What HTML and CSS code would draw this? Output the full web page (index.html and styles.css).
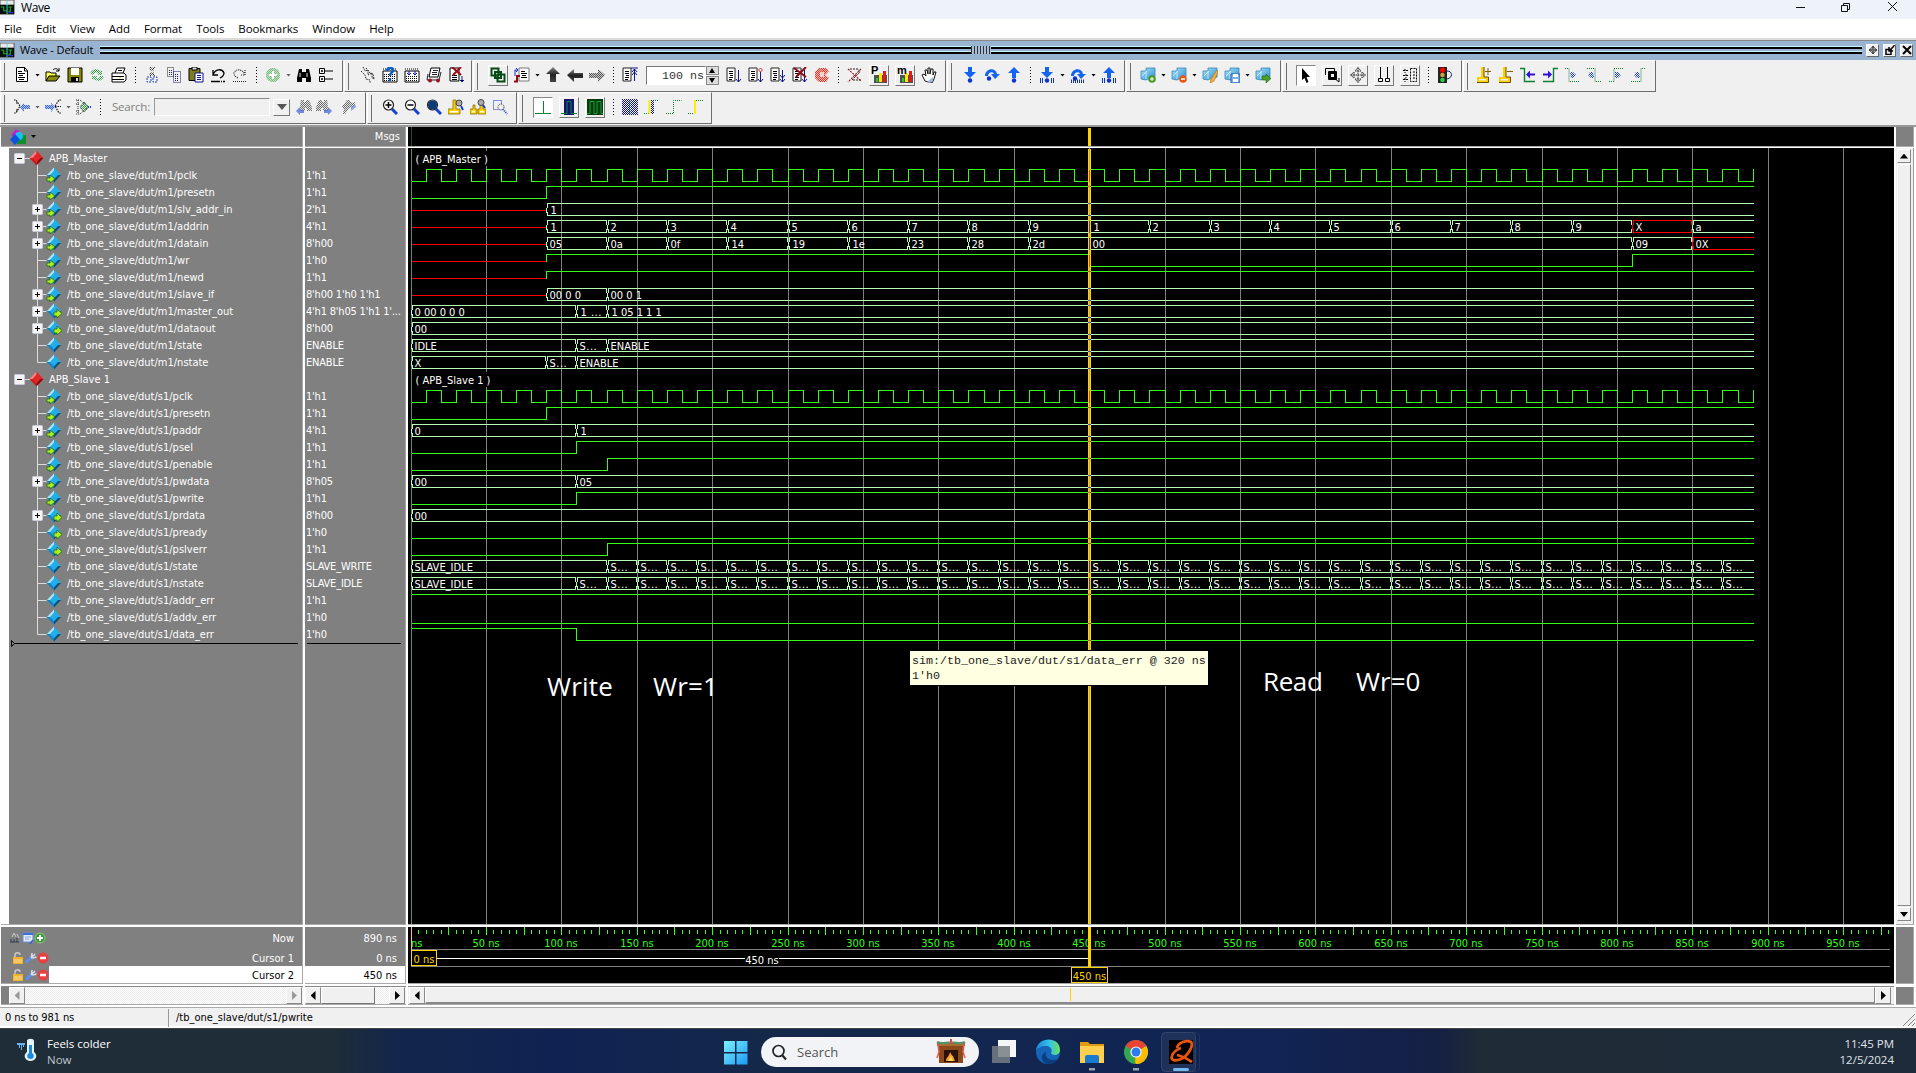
FILE: index.html
```html
<!DOCTYPE html>
<html lang="en">
<head>
<meta charset="utf-8">
<title>Wave</title>
<link rel="stylesheet" href="styles.css">
</head>
<body>
<svg class="defs" width="0" height="0">
  <defs>
    <pattern id="dk" width="2" height="2" patternUnits="userSpaceOnUse"><path d="M0 0h1v1H0zM1 1h1v1H1z" fill="#222"/></pattern>
    <pattern id="db" width="2" height="2" patternUnits="userSpaceOnUse"><path d="M0 0h1v1H0zM1 1h1v1H1z" fill="#1e3cc8"/></pattern>
    <pattern id="dn" width="2" height="2" patternUnits="userSpaceOnUse"><path d="M0 0h1v1H0zM1 1h1v1H1z" fill="#141478"/></pattern>
    <pattern id="dg" width="2" height="2" patternUnits="userSpaceOnUse"><path d="M0 0h1v1H0zM1 1h1v1H1z" fill="#2aa040"/></pattern>
    <pattern id="dr" width="2" height="2" patternUnits="userSpaceOnUse"><path d="M0 0h1v1H0zM1 1h1v1H1z" fill="#f02010"/></pattern>
    <linearGradient id="arr" x1="0" y1="0" x2="0" y2="1"><stop offset="0" stop-color="#888"/><stop offset=".5" stop-color="#222"/><stop offset="1" stop-color="#444"/></linearGradient>
    <linearGradient id="cube" x1="0" y1="0" x2="1" y2="1"><stop offset="0" stop-color="#a8e4fa"/><stop offset="1" stop-color="#2a8ed0"/></linearGradient>
    <linearGradient id="win" x1="0" y1="0" x2="1" y2="1"><stop offset="0" stop-color="#7df0fd"/><stop offset="1" stop-color="#1a9af5"/></linearGradient>
    <linearGradient id="edge" x1="0" y1="0" x2="1" y2="0"><stop offset="0" stop-color="#1b86d8"/><stop offset=".55" stop-color="#35c1ea"/><stop offset="1" stop-color="#6be25a"/></linearGradient>
    <symbol id="app" viewBox="0 0 16 16"><path d="M0 0h15v15H0z" fill="#e8e8e8" stroke="#555"/><path d="M0 5h15v10H0z" fill="#061006"/><path d="M1 7.500h3v4h3M9 7.500h4M9 12h2V8" stroke="#1cab30" stroke-width="1.200" fill="none"/><path d="M7.500 1v14" stroke="#3fe6e8"/><path d="M8 13.500h6" stroke="#3838ff"/></symbol>
    <symbol id="new" viewBox="0 0 16 16"><path d="M2.500 .5h8l3 3v11h-11z" fill="#fff" stroke="#000"/><path d="M4 4.500h4M4 6.500h7M5 8.500h4M4 10.500h7M5 12.500h5M10.500 0v4h3" stroke="#000" fill="none"/></symbol>
    <symbol id="open" viewBox="0 0 16 16"><path d="M1 14V5h4l1 1h5v3" fill="#ffff50" stroke="#000"/><path d="M1 14l3-5h11l-4 5z" fill="#8c8c10" stroke="#000"/><path d="M8 3c2-2 4-2 6 1M14 1v3h-3" stroke="#000" fill="none"/></symbol>
    <symbol id="save" viewBox="0 0 16 16"><path d="M1 1h14v14H1z" fill="#8a8a00" stroke="#000"/><path d="M4 1h8v7H4z" fill="#fff"/><path d="M4 10h8v5H4z" fill="#000"/><path d="M9 11h2v3H9z" fill="#ddd"/></symbol>
    <symbol id="refresh" viewBox="0 0 16 16"><path d="M1 7C2 2 8 1 11 4l2-1v5H8l1-2C7 5 5 6 5 8zM15 9c-1 5-7 6-10 3l-2 1V9h5l-1 2c2 1 4 0 4-2z" fill="url(#dg)"/></symbol>
    <symbol id="print" viewBox="0 0 16 16"><path d="M4 6l2-5h8l-2 5M1 6h12l2 2v5l-2 2H1z" fill="#fff" stroke="#000"/><path d="M1 9.500h12M1 12.500h12M7 3.500h4" stroke="#000"/><path d="M8 11h2" stroke="#dd0"/></symbol>
    <symbol id="cut" viewBox="0 0 16 16"><path d="M5 0h2l4 9H9zM11 0H9L5 9h2z" fill="url(#dk)"/><path d="M3 10h4v5H3zM9 10h4v5H9z" fill="none" stroke="#1e3cc8" stroke-dasharray="2 1"/></symbol>
    <symbol id="copy" viewBox="0 0 16 16"><path d="M1.500 .5h6v9h-6zM3 3.500h3M3 5.500h3M3 7.500h3" fill="none" stroke="#222" stroke-dasharray="1 1"/><path d="M7.500 4.500h7v11h-7zM9 7.500h4M9 9.500h4M9 11.500h4M9 13.500h4" fill="none" stroke="#141478" stroke-dasharray="1 1"/></symbol>
    <symbol id="paste" viewBox="0 0 16 16"><path d="M1 1.500h11v12H1z" fill="#7c7c20" stroke="#000"/><path d="M4 0h5v3H4z" fill="#ddd" stroke="#000"/><path d="M7 6h8v9H7z" fill="#fff" stroke="#10108a"/><path d="M9 8.500h4M9 10.500h4M9 12.500h4" stroke="#10108a"/></symbol>
    <symbol id="undo" viewBox="0 0 16 16"><path d="M3 3v5h5M3 8C5 2 12 1 14 6c0 3-2 4-4 5" stroke="#000" stroke-width="1.300" fill="none"/><path d="M1 14.500h14" stroke="#000" stroke-width="1.500" stroke-dasharray="9 1 1 1"/></symbol>
    <symbol id="redo" viewBox="0 0 16 16"><path d="M13 3v5H8M13 8C11 2 4 1 2 6c0 3 2 4 4 5M1 14.500h14" stroke="#222" stroke-width="1.200" fill="none" stroke-dasharray="1 1"/></symbol>
    <symbol id="plusc" viewBox="0 0 16 16"><circle cx="8" cy="8" r="7" fill="url(#dg)"/><circle cx="8" cy="8" r="7" fill="#a8d4a8" opacity=".6"/><path d="M8 4v8M4 8h8" stroke="#fff" stroke-width="2"/></symbol>
    <symbol id="find" viewBox="0 0 16 16"><path d="M3 2h3v3h4V2h3l2 9v4h-5v-4H6v4H1v-4z" fill="#000"/><path d="M4 6v4M11 6v4" stroke="#ddd"/></symbol>
    <symbol id="find2" viewBox="0 0 16 16"><path d="M5 1h3v2h2V1h3l3 8v3h-5V9H9v3H4V9z" fill="url(#dk)"/><path d="M5 1h3v2h2V1h3l3 8v3h-5V9H9v3H4V9z" fill="#ddd" opacity=".4"/><path d="M0 12l4-4v3h4v3H4v2z" fill="#3c60d8" opacity=".7"/></symbol>
    <symbol id="find3" viewBox="0 0 16 16"><path d="M1 8l5-7h2l3 3 4-1-3 5-4 1-4 6H2l1-5z" fill="url(#dk)"/><path d="M1 8l5-7h2l3 3 4-1-3 5-4 1-4 6H2l1-5z" fill="#ddd" opacity=".4"/><path d="M10 8l4-3 1 3-5 4z" fill="#6a86d8" opacity=".7"/></symbol>
    <symbol id="expand" viewBox="0 0 16 16"><path d="M1.500 1.500h5v5h-5zM1.500 9.500h5v5h-5zM7 4h8M7 12h8M3 4h2M3 12h2M4 3v2M4 11v2" stroke="#000" fill="none"/></symbol>
    <symbol id="compile" viewBox="0 0 16 16"><path d="M3 0l2 4 3-1v5l4-2v5l3 1M1 4l4 4 1 4 4 1v3M6 1l4 5 3 1 1 5" stroke="#222" fill="none" stroke-dasharray="1.500 1"/></symbol>
    <symbol id="calq" viewBox="0 0 16 16"><path d="M1 4h14v11H1z" fill="#fff" stroke="#000"/><path d="M2 7.500h12M2 9.500h12M2 11.500h12M2 13.500h12M1 2h14" stroke="#000" stroke-dasharray="1 1"/><path d="M5 4c0-4 7-4 6 0-1 2-3 2-3 5M8 11v3" stroke="#0a62c8" stroke-width="2.500" fill="none"/></symbol>
    <symbol id="cal" viewBox="0 0 16 16"><path d="M1 4h14v11H1z" fill="#fff" stroke="#000"/><path d="M2 9.500h12M2 11.500h12M2 13.500h12" stroke="#000" stroke-dasharray="1 1"/><path d="M1 2h14" stroke="#000" stroke-dasharray="1 1"/><path d="M5 4v4M3 6l2 2 2-2M11 4v4M9 6l2 2 2-2" stroke="#1414b0" fill="none"/></symbol>
    <symbol id="sim" viewBox="0 0 16 16"><path d="M5 1h9l-2 9H3z" fill="#fff" stroke="#000"/><path d="M7 3.500h5M6 5.500h5M6 7.500h5M2 7l-1 6h12l2-8" stroke="#223" fill="none"/><circle cx="4" cy="13.500" r="2" fill="#a01020"/><circle cx="12" cy="13.500" r="2" fill="#a01020"/></symbol>
    <symbol id="docx" viewBox="0 0 16 16"><path d="M2 1h9v13H2z" fill="#fff" stroke="#000"/><path d="M4 8.500h5M4 10.500h5M4 12.500h5" stroke="#000"/><path d="M4 0l9 8M13 0L5 8" stroke="#a00c14" stroke-width="2"/><path d="M14 9v6M12 13l2 2 2-2" stroke="#14148c"/></symbol>
    <symbol id="env" viewBox="0 0 16 16"><path d="M1.500 1.500h7v7h-7zM7.500 7.500h7v7h-7zM5 5h6v6H5z" stroke="#064a14" stroke-width="2" fill="none"/></symbol>
    <symbol id="envd" viewBox="0 0 16 16"><path d="M5 1h10v13H5z" fill="#fff" stroke="#777"/><path d="M7 4.500h4M7 6.500h6M8 8.500h4M7 10.500h6" stroke="#000"/><path d="M1 9V3h3M2 1l2 2-2 2" stroke="#1030e0" fill="none"/><path d="M0 14.500h3V9h3" stroke="#900c14" stroke-width="2" fill="none"/></symbol>
    <symbol id="aup" viewBox="0 0 16 16"><path d="M8 0l7 7h-4v8H5V7H1z" fill="url(#arr)"/></symbol>
    <symbol id="aleft" viewBox="0 0 16 16"><path d="M0 8l7-6v4h9v5H7v4z" fill="url(#arr)"/></symbol>
    <symbol id="aright" viewBox="0 0 16 16"><path d="M16 8L9 2v4H0v5h9v4z" fill="url(#dk)"/><path d="M16 8L9 2v4H0v5h9v4z" fill="#999" opacity=".45"/></symbol>
    <symbol id="restart" viewBox="0 0 16 16"><path d="M1 1h8v13H1z" fill="#fff" stroke="#222"/><path d="M3 4.500h4M3 6.500h4M4 8.500h3M3 10.500h4M3 12.500h3" stroke="#000"/><path d="M12.500 14V2M9 1h7M10 5l2.500-3L15 5M10 8l2.500-3L15 8" stroke="#14148c" fill="none"/></symbol>
    <symbol id="run" viewBox="0 0 16 16"><path d="M1 1h8v13H1z" fill="#fff" stroke="#222"/><path d="M3 4.500h4M3 6.500h4M4 8.500h3M3 10.500h4M3 12.500h3" stroke="#000"/><path d="M12.500 3v12M10 12l2.500 3 2.500-3" stroke="#14148c" fill="none"/></symbol>
    <symbol id="runc" viewBox="0 0 16 16"><use href="#run"/><path d="M12.500 1l2 2-2 2-2-2z" stroke="#e02020" fill="#fff"/></symbol>
    <symbol id="runa" viewBox="0 0 16 16"><use href="#run"/><path d="M10 8l2.500 3L15 8" stroke="#14148c" fill="none"/></symbol>
    <symbol id="runx" viewBox="0 0 16 16"><use href="#run"/><path d="M2 1l12 9M14 0L4 10" stroke="#8c0c14" stroke-width="2"/></symbol>
    <symbol id="stop" viewBox="0 0 16 16"><path d="M5 1h7l3 3-4 4 4 3-3 4H5l-4-4V5z" fill="url(#dr)"/><path d="M5 1h7l3 3-4 4 4 3-3 4H5l-4-4V5z" fill="#f06050" opacity=".35"/><path d="M6 5h4v5H6z" fill="#f4d0d0"/></symbol>
    <symbol id="rx" viewBox="0 0 16 16"><path d="M3 2h8l2 3-8 8h9" stroke="#222" fill="none" stroke-dasharray="2 1"/><path d="M1 2l13 12M14 2L1 15" stroke="#a01018" stroke-width="1.100" stroke-dasharray="2 1"/></symbol>
    <symbol id="chart" viewBox="0 0 16 16"><path d="M3 8h13v8H3z" fill="#505050"/><path d="M5 11h2v4H5z" fill="#19d030"/><path d="M8 6h3v9H8z" fill="#ffe600"/><path d="M12 4h3v11h-3z" fill="#e31818"/></symbol>
    <symbol id="hand" viewBox="0 0 16 16"><path d="M4 14L1 8l2-1 2 2-1-6h2l1 4V1h2v6l1-5h2v6l1-3h2l-2 7-2 4z" fill="#fff" stroke="#111"/><path d="M6 15l6-5v4l-3 2z" fill="#9ab8e0"/></symbol>
    <symbol id="sin" viewBox="0 0 16 16"><path d="M6 0h4v5h4l-6 6-6-6h4z" fill="#1464f0"/><circle cx="8" cy="13.500" r="2.200" fill="#1030d0"/></symbol>
    <symbol id="sover" viewBox="0 0 16 16"><path d="M1 9C1 1 12 0 13 7h3l-5 5-4-5h3C9 4 4 5 4 9z" fill="#1464f0"/><circle cx="5" cy="11.500" r="2.200" fill="#1030d0"/></symbol>
    <symbol id="sout" viewBox="0 0 16 16"><path d="M8 0l6 6h-4v5H6V6H2z" fill="#1464f0"/><circle cx="8" cy="13.500" r="2.200" fill="#1030d0"/></symbol>
    <symbol id="bar" viewBox="0 0 16 16"><path d="M1.500 11v5M3.500 11v5M12.500 11v5M14.500 11v5" stroke="#1030c0"/></symbol>
    <symbol id="cin" viewBox="0 0 16 16"><use href="#sin"/><use href="#bar"/></symbol>
    <symbol id="cover" viewBox="0 0 16 16"><use href="#sover"/><path d="M1 14.500h14" stroke="#1030c0" stroke-width="4" stroke-dasharray="1 1"/></symbol>
    <symbol id="cout" viewBox="0 0 16 16"><use href="#sout"/><use href="#bar"/></symbol>
    <symbol id="bm" viewBox="0 0 16 16"><path d="M1 4h5V1h9v9l-5 1-4 2-5-1z" fill="url(#cube)" stroke="#3a86b8" stroke-width=".8"/><path d="M6 4v8M2 9l5-5" stroke="#d8f4ff" stroke-width=".8"/></symbol>
    <symbol id="bm1" viewBox="0 0 16 16"><use href="#bm"/><circle cx="12" cy="12" r="3.800" fill="#4a9a28"/><path d="M12 10v4M10 12h4" stroke="#fff"/></symbol>
    <symbol id="bm2" viewBox="0 0 16 16"><use href="#bm"/><circle cx="12" cy="12" r="3.800" fill="#e85810"/><path d="M10 12h4" stroke="#fff" stroke-width="1.500"/></symbol>
    <symbol id="bm3" viewBox="0 0 16 16"><use href="#bm"/><path d="M15 3l-6 9-1 4 4-2 4-9z" fill="#f0b040" stroke="#a87010" stroke-width=".6"/></symbol>
    <symbol id="bm4" viewBox="0 0 16 16"><use href="#bm"/><path d="M7 7h9v9H7z" fill="#7ab0e8" stroke="#2860a8"/><path d="M9 7h5v3H9zM9 12h5v3H9z" fill="#fff"/></symbol>
    <symbol id="bm5" viewBox="0 0 16 16"><use href="#bm"/><path d="M7 9h4V7l5 4.500-5 4.500v-3H7z" fill="#48a028" stroke="#246010" stroke-width=".6"/></symbol>
    <symbol id="ptr" viewBox="0 0 16 16"><path d="M4 1l8 9H8.500l2 5-2 1-2-5L4 13z" fill="#000"/></symbol>
    <symbol id="zoomm" viewBox="0 0 16 16"><path d="M1.500 8V1.500h9V4M4.500 4.500h8v8h-8z" stroke="#000" fill="none"/><path d="M6 6h5v5H6z" stroke="#000" stroke-width="2" fill="none"/><path d="M10 11l5 4v-4" stroke="#000" fill="none"/></symbol>
    <symbol id="pan" viewBox="0 0 16 16"><path d="M8 1v14M1 8h14M8 .5L5 4h6zM8 15.500L5 12h6zM.5 8L4 5v6zM15.500 8L12 5v6z" fill="none" stroke="#222" stroke-dasharray="1.500 .8"/></symbol>
    <symbol id="two" viewBox="0 0 16 16"><path d="M4.500 0v11M11.500 0v11M2.500 11.500h4v3h-4zM9.500 11.500h4v3h-4z" stroke="#000" fill="none"/></symbol>
    <symbol id="edit" viewBox="0 0 16 16"><path d="M1 3.500h6M1 8.500h6M1 12.500h6M3 2v4M4 7v4M3 11v4M8.500 1.500h6v13h-6zM12 4v9" stroke="#000" fill="none" stroke-dasharray="2 1"/></symbol>
    <symbol id="light" viewBox="0 0 16 16"><path d="M1 0h9v16H1z" fill="#222"/><circle cx="5.500" cy="3" r="2.600" fill="#f00"/><circle cx="5.500" cy="8" r="2.300" fill="#c8a040"/><circle cx="5.500" cy="13" r="2.300" fill="#20d040"/><path d="M10 4c6 0 6 7 0 8" stroke="#14286e" fill="none"/></symbol>
    <symbol id="cdel" viewBox="0 0 16 16"><path d="M5 0h3v10h4v5H1v-5h4z" fill="#ffd000"/><path d="M8 0v10h4.500v5.500H1" stroke="#6a5000" fill="none"/><path d="M3 12h7v1.500H3z" fill="#f0f0f0"/><path d="M9 4.500h6" stroke="#806000"/></symbol>
    <symbol id="cadd" viewBox="0 0 16 16"><use href="#cdel"/><path d="M12 1v7" stroke="#806000"/></symbol>
    <symbol id="eprev" viewBox="0 0 16 16"><path d="M0 1.500h4.500v13H15" stroke="#0a8030" stroke-width="1.400" fill="none"/><path d="M6 7.500l4-4v3h5v2h-5v3z" fill="#3010d8"/></symbol>
    <symbol id="enext" viewBox="0 0 16 16"><path d="M16 1.500h-4.500v13H1" stroke="#0a8030" stroke-width="1.400" fill="none"/><path d="M10 7.500l-4-4v3H1v2h5v3z" fill="#3010d8"/></symbol>
    <symbol id="e1" viewBox="0 0 16 16"><path d="M1 1.500h4v13h10" stroke="#0a8030" stroke-dasharray="1 1" fill="none"/><path d="M6 5h3l3 3-3 3H7z" fill="url(#db)"/></symbol>
    <symbol id="e2" viewBox="0 0 16 16"><path d="M1 1.500h8v13h6" stroke="#0a8030" stroke-dasharray="1 1" fill="none"/><path d="M7 5H4L2 8l3 3h3z" fill="url(#db)"/></symbol>
    <symbol id="e3" viewBox="0 0 16 16"><path d="M15 1.500H6v13H1" stroke="#0a8030" stroke-dasharray="1 1" fill="none"/><path d="M7 5h3l3 3-3 3H7z" fill="url(#db)"/></symbol>
    <symbol id="e4" viewBox="0 0 16 16"><path d="M15 1.500h-4v13H1" stroke="#0a8030" stroke-dasharray="1 1" fill="none"/><path d="M9 5H6L4 8l3 3h3z" fill="url(#db)"/></symbol>
    <symbol id="j1" viewBox="0 0 16 16"><path d="M0 1h2l4 6-4 7H0M2 4h2M2 11h2" stroke="#111" stroke-width="1.200" stroke-dasharray="1.500 1" fill="none"/><path d="M6 8l4-4v2h6v4h-6v3z" fill="url(#db)"/><path d="M6 8l4-4v2h6v4h-6v3z" fill="#5a90f0" opacity=".45"/></symbol>
    <symbol id="j2" viewBox="0 0 16 16"><path d="M16 1h-2l-4 6 4 7h2M10 7.500h6" stroke="#111" stroke-width="1.200" stroke-dasharray="1.500 1" fill="none"/><path d="M10 8L6 4v2H0v4h6v3z" fill="url(#db)"/><path d="M10 8L6 4v2H0v4h6v3z" fill="#5a90f0" opacity=".45"/></symbol>
    <symbol id="j3" viewBox="0 0 16 16"><path d="M0 1h4l8 7-8 7H0M0 5h4M0 12h4M2 1v14" stroke="#222" stroke-dasharray="1 1" fill="none"/><path d="M8 3l5 5-5 5-4-5z" fill="url(#dg)" stroke="#222" stroke-dasharray="1 1"/><path d="M12 8h4" stroke="#1e3cc8" stroke-width="2" stroke-dasharray="1 1"/></symbol>
    <symbol id="mag" viewBox="0 0 16 16"><path d="M10 10l5 5" stroke="#1840d0" stroke-width="3"/><circle cx="6.500" cy="6" r="5" fill="#fff" stroke="#222" stroke-width="1.200"/></symbol>
    <symbol id="zin" viewBox="0 0 16 16"><use href="#mag"/><path d="M6.500 3v6M3.500 6h6" stroke="#000" stroke-width="1.500"/></symbol>
    <symbol id="zout" viewBox="0 0 16 16"><use href="#mag"/><path d="M3.500 6h6" stroke="#000" stroke-width="1.500"/></symbol>
    <symbol id="zfull" viewBox="0 0 16 16"><use href="#mag"/><circle cx="6.500" cy="6" r="4.500" fill="#0c3c78"/></symbol>
    <symbol id="zcur" viewBox="0 0 16 16"><path d="M5 1h3v9h4v5H0v-5h5z" fill="#ffd000" stroke="#8c6c00" stroke-width=".8"/><path d="M2 12h8v1.500H2z" fill="#fff"/><circle cx="11" cy="4" r="3" fill="#aaa" stroke="#444"/><path d="M13 7l2 4" stroke="#1840d0" stroke-width="2"/></symbol>
    <symbol id="zcur2" viewBox="0 0 16 16"><path d="M3 6h2v4h2v5H0v-5h3zM10 5h3v5h3v5H8v-5h2z" fill="#ffd000" stroke="#8c6c00" stroke-width=".8"/><path d="M2 12h3v1.500H2zM10 12h4v1.500h-4z" fill="#fff"/><circle cx="11" cy="3.500" r="3" fill="#aaa" stroke="#444"/><path d="M13 6l2 3" stroke="#1840d0" stroke-width="2"/></symbol>
    <symbol id="zarea" viewBox="0 0 16 16"><path d="M1.500 1.500h8v9h-8z" stroke="#1428c0" stroke-dasharray="1 1" fill="none"/><circle cx="9" cy="8" r="3" fill="#eee" stroke="#222" stroke-dasharray="1 1"/><path d="M11 10l4 5" stroke="#1840d0" stroke-width="2" stroke-dasharray="1 1"/></symbol>
    <symbol id="w1" viewBox="0 0 16 16"><path d="M0 14.500h16M8.500 2v12" stroke="#0a8030" fill="none"/></symbol>
    <symbol id="w2" viewBox="0 0 16 16"><path d="M3 0h10v16H3z" fill="#14146e"/><path d="M0 14.500h6v-12h4v12h6" stroke="#0a8a38" fill="none"/></symbol>
    <symbol id="w3" viewBox="0 0 16 16"><path d="M0 0h16v16H0z" fill="#063c0a"/><path d="M0 14.500h3v-12h4v12h3v-12h4v12h2" stroke="#18a040" fill="none"/></symbol>
    <symbol id="w4" viewBox="0 0 16 16"><path d="M0 0h16v16H0z" fill="url(#dn)"/><path d="M8 2v14" stroke="#18a040" stroke-dasharray="1 1"/></symbol>
    <symbol id="w5" viewBox="0 0 16 16"><path d="M0 14.500h5M9 1.500h6" stroke="#0a8030" stroke-dasharray="1 1"/><path d="M7 1h3v14H7z" fill="url(#dn)"/><path d="M5.500 1v14" stroke="#ee0" stroke-width="2"/></symbol>
    <symbol id="w6" viewBox="0 0 16 16"><path d="M0 14.500h7.500v-13h8" stroke="#0a8030" stroke-dasharray="1 1" fill="none"/></symbol>
    <symbol id="w7" viewBox="0 0 16 16"><path d="M0 14.500h7M8 1.500h7" stroke="#0a8030" stroke-dasharray="1 1"/><path d="M7 1v14" stroke="#fe0" stroke-width="2"/></symbol>
    <symbol id="objs" viewBox="0 0 16 16"><path d="M7 6h9v9H7z" fill="#109028"/><path d="M1 6l5-6 4 3-4 6z" fill="#c020d0"/><circle cx="9" cy="7" r="4" fill="#18c0f0"/><path d="M5 5l5 5.500L5 16l-5-5.500z" fill="#1050e0"/></symbol>
    <symbol id="lock" viewBox="0 0 12 12"><path d="M3 5V3c0-3 5-3 5 0" stroke="#c8c8c8" stroke-width="1.500" fill="none"/><path d="M1 5h10v7H1z" fill="#f0b030"/><path d="M2 8h8M2 10h8" stroke="#fbe090"/></symbol>
    <symbol id="wrench" viewBox="0 0 12 12"><path d="M1 10.500L7 5" stroke="#5a90f0" stroke-width="3"/><path d="M6 6l4-4M7 1l-.5 3.500L8 6l3.500-1" stroke="#d8dce8" stroke-width="1.500" fill="none"/></symbol>
    <symbol id="minus" viewBox="0 0 12 12"><circle cx="6" cy="6" r="5.500" fill="#e84040"/><path d="M3 6h6" stroke="#fff" stroke-width="2.500"/></symbol>
    <symbol id="cplus" viewBox="0 0 12 12"><circle cx="6" cy="6" r="5" fill="#3a9a34" stroke="#8ad080"/><path d="M6 3v6M3 6h6" stroke="#fff" stroke-width="2"/></symbol>
    <symbol id="gridi" viewBox="0 0 12 12"><path d="M1 1h10v9H1z" fill="#dfeaf8" stroke="#6a90d0"/><path d="M1 2h10" stroke="#3a70d8" stroke-width="2"/><path d="M3 5h6M3 7h4" stroke="#8aa8d8"/><path d="M8 12l3-4" stroke="#36c" stroke-width="1.500"/></symbol>
    <symbol id="scale" viewBox="0 0 12 12"><path d="M3 5l2-4 2 4M8 2l2 4" stroke="#ccc" fill="none"/><path d="M1 10h9M2 7v3M5 7v3M8 6v4" stroke="#333c50"/></symbol>
  </defs>
</svg>

<header class="title"><svg class="appicon"><use href="#app"/></svg><span>Wave</span>
  <svg class="winbtns" width="116" height="18"><path d="M5 7.500h9M50.500 5.500h6v6h-6zM52.500 5V3.500h6V9.500H57" stroke="#111" fill="none"/><path d="M97 2l9 9M106 2l-9 9" stroke="#111" fill="none"/></svg>
</header>
<nav class="menu"><span>File</span><span>Edit</span><span>View</span><span>Add</span><span>Format</span><span>Tools</span><span>Bookmarks</span><span>Window</span><span>Help</span></nav>
<div class="dock"><svg class="appicon"><use href="#app"/></svg><span>Wave - Default</span><i class="rail"><i class="grab"></i></i>
  <b class="dbtn"><svg width="10" height="10"><path d="M5 1v8M1 5h8M5 1L3.500 3h3zM5 9L3.500 7h3zM1 5l2-1.500v3zM9 5L7 3.500v3z" fill="none" stroke="#222" stroke-width=".8"/></svg></b><b class="dbtn"><svg width="10" height="10"><path d="M1 4.500h5v5H1zM9 0v1M5 5l4-4M4 2v4h4" stroke="#000" stroke-width="1.500" fill="none"/></svg></b><b class="dbtn"><svg width="10" height="10"><path d="M1 1l8 8M9 1L1 9" stroke="#000" stroke-width="2"/></svg></b>
</div>
<section class="tools">
  <div class="trow">
    <div class="tb g1"><svg class="i"><use href="#new"/></svg><i class="dd"></i><svg class="i"><use href="#open"/></svg><svg class="i"><use href="#save"/></svg><svg class="i"><use href="#refresh"/></svg><svg class="i"><use href="#print"/></svg><i class="sep"></i><svg class="i"><use href="#cut"/></svg><svg class="i"><use href="#copy"/></svg><svg class="i"><use href="#paste"/></svg><svg class="i"><use href="#undo"/></svg><svg class="i"><use href="#redo"/></svg><i class="sep"></i><svg class="i"><use href="#plusc"/></svg><i class="dd off"></i><svg class="i"><use href="#find"/></svg><svg class="i"><use href="#expand"/></svg></div>
    <div class="tb g2"><svg class="i"><use href="#compile"/></svg><svg class="i"><use href="#calq"/></svg><svg class="i"><use href="#cal"/></svg><svg class="i"><use href="#sim"/></svg><svg class="i"><use href="#docx"/></svg></div>
    <div class="tb g3"><b class="fr"><svg class="i"><use href="#env"/></svg></b><svg class="i"><use href="#envd"/></svg><i class="dd"></i><svg class="i"><use href="#aup"/></svg><svg class="i"><use href="#aleft"/></svg><svg class="i"><use href="#aright"/></svg><i class="sep"></i><svg class="i"><use href="#restart"/></svg><span class="entry">100 ns</span><span class="spin"><i></i><i></i></span><svg class="i"><use href="#run"/></svg><svg class="i"><use href="#runc"/></svg><svg class="i"><use href="#runa"/></svg><svg class="i"><use href="#runx"/></svg><svg class="i"><use href="#stop"/></svg><i class="sep"></i><svg class="i"><use href="#rx"/></svg><b class="fr pm"><svg class="i"><use href="#chart"/></svg><span>P</span></b><b class="fr pm"><svg class="i"><use href="#chart"/></svg><span>m</span></b><svg class="i"><use href="#hand"/></svg></div>
    <div class="tb g4"><svg class="i"><use href="#sin"/></svg><svg class="i"><use href="#sover"/></svg><svg class="i"><use href="#sout"/></svg><i class="sep"></i><svg class="i"><use href="#cin"/></svg><i class="dd"></i><svg class="i"><use href="#cover"/></svg><i class="dd"></i><svg class="i"><use href="#cout"/></svg></div>
    <div class="tb g5"><svg class="i"><use href="#bm1"/></svg><i class="dd"></i><svg class="i"><use href="#bm2"/></svg><i class="dd"></i><svg class="i"><use href="#bm3"/></svg><svg class="i"><use href="#bm4"/></svg><i class="dd"></i><svg class="i"><use href="#bm5"/></svg></div>
    <div class="tb g6"><b class="fr on"><svg class="i"><use href="#ptr"/></svg></b><b class="fr"><svg class="i"><use href="#zoomm"/></svg></b><b class="fr"><svg class="i"><use href="#pan"/></svg></b><b class="fr"><svg class="i"><use href="#two"/></svg></b><b class="fr"><svg class="i"><use href="#edit"/></svg></b><i class="sep"></i><svg class="i"><use href="#light"/></svg></div>
    <div class="tb g7"><svg class="i"><use href="#cadd"/></svg><svg class="i"><use href="#cdel"/></svg><svg class="i"><use href="#eprev"/></svg><svg class="i"><use href="#enext"/></svg><svg class="i"><use href="#e1"/></svg><svg class="i"><use href="#e2"/></svg><svg class="i"><use href="#e3"/></svg><svg class="i"><use href="#e4"/></svg></div>
  </div>
  <div class="trow">
    <div class="tb h1"><svg class="i"><use href="#j1"/></svg><i class="dd off"></i><svg class="i"><use href="#j2"/></svg><i class="dd off"></i><svg class="i"><use href="#j3"/></svg><i class="sep"></i><span class="slabel">Search:</span><span class="sbox"></span><b class="drop"><i></i></b><svg class="i"><use href="#find2"/></svg><svg class="i flip"><use href="#find2"/></svg><svg class="i last"><use href="#find3"/></svg></div>
    <div class="tb h2"><svg class="i"><use href="#zin"/></svg><svg class="i"><use href="#zout"/></svg><svg class="i"><use href="#zfull"/></svg><svg class="i"><use href="#zcur"/></svg><svg class="i"><use href="#zcur2"/></svg><svg class="i"><use href="#zarea"/></svg></div>
    <div class="tb h3"><b class="fr on"><svg class="i"><use href="#w1"/></svg></b><b class="fr"><svg class="i"><use href="#w2"/></svg></b><b class="fr"><svg class="i"><use href="#w3"/></svg></b><i class="sep"></i><svg class="i"><use href="#w4"/></svg><svg class="i"><use href="#w5"/></svg><svg class="i"><use href="#w6"/></svg><svg class="i"><use href="#w7"/></svg></div>
  </div>
</section>

<main class="grid">
  <div class="p gray top"><svg width="16" height="16"><use href="#objs"/></svg><i class="dd"></i></div>
  <div class="p gray msgs">Msgs</div>
  <div class="p black"><svg class="fill" viewBox="408 127 1486 19" shape-rendering="crispEdges"><path d="M411.500 127v19" stroke="#1f4a24"/><path d="M1088 128h3v18h-3z" fill="#ffd200"/></svg></div>
  <div class="p gray"></div>

  <div class="p gray names"><div id="names"></div></div>
  <div class="p gray values"><div id="values"></div></div>
  <div class="p black canvas"><svg id="wave" class="fill" viewBox="408 148 1486 776" shape-rendering="crispEdges"></svg>
    <div class="note n1">Write</div><div class="note n2">Wr=1</div><div class="note n3">Read</div><div class="note n4">Wr=0</div>
    <div class="tip">sim:/tb_one_slave/dut/s1/data_err @ 320 ns<br>1'h0</div>
  </div>
  <div class="p vsb"><b class="sbtn up"></b><b class="thumb"></b><b class="sbtn down"></b></div>

  <div class="p gray cur"><div class="now"><svg class="s"><use href="#scale"/></svg><svg class="s"><use href="#gridi"/></svg><svg class="s"><use href="#cplus"/></svg><span>Now</span></div><div><svg class="s"><use href="#lock"/></svg><svg class="s"><use href="#wrench"/></svg><svg class="s"><use href="#minus"/></svg><span>Cursor 1</span></div><div><svg class="s"><use href="#lock"/></svg><svg class="s"><use href="#wrench"/></svg><svg class="s"><use href="#minus"/></svg><span class="sel">Cursor 2</span></div></div>
  <div class="p gray cur vals"><div class="now"><span>890 ns</span></div><div><span>0 ns</span></div><div><span class="sel">450 ns</span></div></div>
  <div class="p black"><svg id="scalebar" class="fill" viewBox="408 927 1486 56" shape-rendering="crispEdges"></svg></div>
  <div class="p gray"></div>

  <div class="p hsb names-sb"><b class="sbtn left off"></b><b class="trough"></b><b class="sbtn right off"></b></div>
  <div class="p hsb msgs-sb"><b class="sbtn left"></b><b class="thumb"></b><b class="trough"></b><b class="sbtn right"></b></div>
  <div class="p hsb wave-sb"><b class="sbtn left"></b><b class="thumb"><i></i></b><b class="sbtn right"></b></div>
  <div class="p gray"></div>
</main>
<footer class="status"><span class="s1">0 ns to 981 ns</span><span class="s2">/tb_one_slave/dut/s1/pwrite</span><svg width="16" height="18"><path d="M15 5L3 17M15 10l-7 7M15 14l-3 3" stroke="#888"/></svg></footer>
<div class="taskbar">
  <div class="weather"><svg width="24" height="26"><path d="M1 5h8v2H8v2H7V7H6v5H5V7H4v3H3V7H1z" fill="#6ab4f0"/><path d="M11 3c0-3 7-3 7 0v11c5 4 1 9-3.500 9S6 18 11 14z" fill="#e4f2fc"/><path d="M13 7h3v8c3 2 2 6-1.500 6S10 17 13 15z" fill="#1c8ae0"/></svg><p><span>Feels colder</span><span class="dim">Now</span></p></div>
  <div class="apps">
    <svg class="start" width="24" height="24"><path d="M0 0h11v11H0zM12.500 0h11v11h-11zM0 12.500h11v11H0zM12.500 12.500h11v11h-11z" fill="url(#win)"/></svg>
    <div class="search"><svg width="17" height="17"><circle cx="7.500" cy="7" r="5.500" fill="none" stroke="#222" stroke-width="1.700"/><path d="M11.500 11.500L15 15.500" stroke="#222" stroke-width="2"/></svg><span>Search</span>
      <svg width="32" height="26"><path d="M4 6h24v18H4z" fill="#8a4a1c"/><path d="M2 4h28v3H2z" fill="#b06a2c"/><path d="M9 11h14v12H9z" fill="#2a1208"/><path d="M11 22c0-4 3-4 4-9 2 3 2 4 3 4l2 5z" fill="#ff9a20"/><path d="M13 22l3-5 2 5z" fill="#ffe070"/><path d="M2 3c5 3 9 0 14 1 5-1 9 2 14-1" stroke="#5a9068" stroke-width="2.500" fill="none"/><path d="M3 5l1 8-2 6M29 5l-1 8 2 6" stroke="#e05a5a" stroke-width="1.600" fill="none"/><path d="M15 3v-3h2v3l1 2h-4z" fill="#e04848"/></svg></div>
    <svg width="26" height="26"><path d="M7 1h18v17H7z" fill="#f4f6f8"/><path d="M1 7h18v17H1z" fill="#777c84" opacity=".85"/></svg>
    <svg width="26" height="26"><circle cx="13" cy="13" r="12" fill="#1464b8"/><path d="M1 12C2-3 25-3 25 11c0 6-8 6-9 3 2-4-1-7-5-7C6 7 2 9 1 12z" fill="url(#edge)"/><path d="M11 13c-2 6 5 10 12 7-4 5-10 6-13 4-5-3-4-9 1-11z" fill="#0c3f80"/></svg>
    <svg width="26" height="34"><path d="M1 3h8l2 2h14v4H1z" fill="#e09a10"/><path d="M1 7h24v17H1z" fill="#ffd050"/><path d="M6 24v-6q0-2 2-2h10q2 0 2 2v6z" fill="#1a7ad0"/><path d="M10 29h6v2.500h-6z" fill="#98a2b0"/></svg>
    <svg width="26" height="34"><circle cx="13" cy="13" r="12" fill="#33a852"/><path d="M13 13L2.600 7A12 12 0 0 1 23.400 7z" fill="#ea4335"/><path d="M13 13l10.400-6A12 12 0 0 1 13 25l-1-2z" fill="#fbbc05"/><circle cx="13" cy="13" r="5.600" fill="#fff"/><circle cx="13" cy="13" r="4.500" fill="#2a7af0"/><path d="M10 29h6v2.500h-6z" fill="#98a2b0"/></svg>
    <svg class="q" width="40" height="40"><rect x=".5" y=".5" width="38" height="39" rx="4" fill="none" stroke="#22345c"/><rect x=".5" y=".5" width="34" height="39" rx="4" fill="#1e3158" stroke="#32446a"/><path d="M8 8h24v24H8z" fill="#000"/><path d="M16 16c1-6 10-8 14-6 3 3-3 14-10 17-5 2-11 2-9-3 1-4 6-7 9-8M16 23c5 1 9 3 15 7" stroke="#e8540f" stroke-width="2.800" fill="none"/><rect x="12" y="36" width="16" height="3" rx="1.500" fill="#76b9ed"/></svg>
  </div>
  <div class="clock"><span>11:45 PM</span><span>12/5/2024</span></div>
</div>
<script src="wave.js"></script>
</body>
</html>
```
FILE: styles.css
```css
* { box-sizing: border-box; }
body { margin: 0; width: 1916px; height: 1073px; overflow: hidden; display: flex; flex-direction: column; background: #f0f0f0; font: 11px "DejaVu Sans Condensed", "DejaVu Sans", sans-serif; color: #000; white-space: nowrap; }
.defs { position: absolute; }
svg { display: block; flex: none; }
.appicon { width: 15px; height: 15px; }
.title { height: 19px; background: #eef3fa; display: flex; align-items: flex-start; font: 12px/16px "Open Sans", sans-serif; }
.title span { margin-left: 6px; letter-spacing: -.4px; }
.title .winbtns { width: 116px; margin-left: auto; margin-right: 9px; }
.menu { height: 21px; background: #fff; display: flex; font: 11.500px/20px "Open Sans", sans-serif; padding-left: 4px; gap: 14px; letter-spacing: -.08px; border-bottom: 2px solid #dcdcdc; }
.dock { height: 20px; background: #99b4d1; border-top: 1px solid #888; display: flex; align-items: center; font: 11px "Open Sans", sans-serif; padding-right: 3px; padding-bottom: 1px; }
.dock span { margin: 0 6px 1px 5px; width: 74px; letter-spacing: -.1px; }
.rail { flex: 1; height: 8px; display: flex; justify-content: center; background: linear-gradient(#c8f4fa 0 1px, #000 1px 3px, #99b4d1 3px 5px, #c8f4fa 5px 6px, #000 6px 8px); }
.grab { width: 20px; height: 8px; background: repeating-linear-gradient(90deg, #333 0 1px, transparent 1px 3px), #a8bdd6; }
.dbtn { width: 13px; height: 13px; margin-left: 4px; background: #f0f0f0; border: 1px solid; border-color: #fff #666 #666 #fff; display: flex; align-items: center; justify-content: center; }

.tools { height: 67px; border-bottom: 2px solid #999; background: #f0f0f0; }
.trow { display: flex; height: 32px; gap: 1px; }
.tb { display: flex; align-items: center; border: 1px solid; border-color: #fff #6e6e6e #6e6e6e #fff; height: 32px; padding-bottom: 2px; background: linear-gradient(#6e6e6e, #6e6e6e) 3px 2px / 1px 27px no-repeat; }
.i { width: 16px; height: 16px; margin: 0 3px; }
.g1 { width: 343px; padding-left: 10px; }
.g2 { width: 128px; padding-left: 12px; }
.g3 { width: 473px; padding-left: 11px; }
.g4 { width: 178px; padding-left: 11px; }
.g5 { width: 155px; padding-left: 10px; }
.g6 { width: 180px; padding-left: 10px; }
.g7 { width: 193px; padding-left: 9px; }
.h1 { width: 366px; padding-left: 10px; }
.h2 { width: 150px; padding-left: 11px; }
.h3 { width: 194px; padding-left: 11px; }
.dd { flex: none; width: 9px; height: 3px; display: block; background: #000; clip-path: polygon(2px 0, 7px 0, 4.500px 3px); }
.off { opacity: .6; }
.sep { flex: none; width: 11px; height: 16px; background: repeating-linear-gradient(#000 0 1px, #f0f0f0 1px 3px) 5px 0 / 1px 16px no-repeat; }
.fr { flex: none; width: 20px; height: 21px; margin: 0 3px; border: 1px solid; border-color: #fff #777 #777 #fff; display: flex; align-items: center; justify-content: center; position: relative; }
.fr .i { margin: 0; }
.fr.on { background: #fff; border-color: #888 #fff #fff #888; }
.pm span { position: absolute; left: 1px; top: -1px; font: bold 11px/11px "Liberation Sans", sans-serif; }
.entry { width: 60px; height: 19px; margin-left: 5px; border: 1px solid; border-color: #777 #fff #fff #777; background: #fff; font: 11.670px/19px "Liberation Mono", monospace; text-align: right; color: #333; padding-right: 1px; }
.spin { width: 13px; height: 19px; margin-right: 4px; display: flex; flex-direction: column; gap: 1px; }
.spin i { flex: 1; background: #ddd; border: 1px solid #888; position: relative; }
.spin i::after { content: ""; position: absolute; left: 2px; top: 1px; border: 3.500px solid transparent; border-top-width: 0; border-bottom: 5px solid #000; }
.spin i + i::after { transform: scaleY(-1); }
.slabel { font: 11.500px "Open Sans", sans-serif; color: #808080; width: 38px; margin: 0 0 1px 6px; letter-spacing: -.2px; }
.sbox { width: 116px; height: 18px; margin-left: 4px; border: 1px solid; border-color: #888 #fff #fff #999; }
.drop { width: 17px; height: 17px; margin: 0 3px; border: 1px solid; border-color: #fff #777 #777 #fff; display: flex; align-items: center; justify-content: center; }
.drop i { border: 5px solid transparent; border-top: 6px solid #555; border-bottom: 0; }
.h1 .flip { transform: scaleX(-1); margin-left: 1px; }
.h1 .last { margin-left: 6px; }

.grid { height: 878px; padding-left: 1px; background: #fff; display: grid; grid-template-columns: 302px 101px 1486px 18px; column-gap: 2px; grid-template-rows: 19px 2px 776px 3px 56px 4px 17px; align-content: start; }
.grid .p:nth-child(-n+4) { grid-row: 1; }
.grid .p:nth-child(n+5):nth-child(-n+8) { grid-row: 3; }
.grid .p:nth-child(n+9):nth-child(-n+12) { grid-row: 5; }
.grid .p:nth-child(n+13) { grid-row: 7; }
.p { min-width: 0; overflow: hidden; box-shadow: 0 1px 0 #aaa; }
.gray { background: #808080; color: #fff; border-right: 1px solid #a8a8a8; }
.black { background: #000; }
.fill { width: 1486px; height: 100%; }
.top { display: flex; align-items: center; padding-left: 9px; }
.top .dd { margin-left: 3px; }
.msgs { text-align: right; padding-right: 5px; line-height: 20px; }
.names { border-left: 8px solid #fff; padding-top: 2px; }
.values { padding: 2px 0 0 1px; }
.row { height: 17px; display: flex; align-items: center; }
.row svg { position: relative; top: -1px; }
.row span { line-height: 17px; }
.values .row span { letter-spacing: -.2px; }
.names .mark { height: 7px; margin: -3px 4px 0 2px; background: linear-gradient(#000, #000) 0 3px / 100% 1px no-repeat; }
.values .mark { height: 1px; margin: 0 4px 0 1px; background: #000; }
.canvas { position: relative; }
.canvas text, #scalebar text { font-family: "DejaVu Sans Condensed", "DejaVu Sans", sans-serif; font-size: 11px; fill: #fff; }
.canvas .dots { letter-spacing: .5px; }
#scalebar .t { fill: #32ff1e; }
#scalebar .y { fill: #ffd200; }
.note { position: absolute; color: #fff; font: 26px/30px "Open Sans", sans-serif; }
.n1 { left: 139px; top: 523px; letter-spacing: .2px; }
.n2 { left: 245px; top: 523px; letter-spacing: .2px; }
.n3 { left: 855px; top: 518px; letter-spacing: -.4px; }
.n4 { left: 948px; top: 518px; }
.tip { position: absolute; left: 501px; top: 502px; width: 300px; height: 36px; padding: 3px 0 0 2px; background: #ffffe1; border: 1px solid #000; color: #222; font: 11.670px/15px "Liberation Mono", monospace; }

.sbtn { flex: none; background: #f0f0f0; border: 1px solid; border-color: #fff #888 #888 #fff; display: flex; align-items: center; justify-content: center; }
.sbtn::after { content: ""; width: 5px; height: 9px; background: #000; clip-path: polygon(100% 0, 100% 100%, 0 50%); }
.sbtn.right::after { transform: scaleX(-1); }
.sbtn.off { opacity: 1; }
.sbtn.off::after { background: #999; }
.sbtn.up::after, .sbtn.down::after { width: 8px; height: 5px; clip-path: polygon(50% 0, 100% 100%, 0 100%); }
.sbtn.down::after { transform: scaleY(-1); }
.vsb { display: flex; flex-direction: column; background: #f0f0f0; padding: 1px 2px 3px 1px; border-right: 1px solid #999; }
.vsb .sbtn { height: 14px; }
.vsb .thumb { flex: 1; margin: 1px 0; border: 1px solid; border-color: #fff #888 #888 #fff; }
.hsb { display: flex; background: #f0f0f0; padding: 0 1px; box-shadow: 0 -1px 0 #888, 0 1px 0 #aaa; }
.hsb .sbtn { width: 16px; }
.names-sb { border-left: 8px solid #808080; padding-left: 0; }
.trough { flex: 1; background: repeating-conic-gradient(#fff 0 25%, #ececec 0 50%) 0 0 / 2px 2px; }
.msgs-sb { padding: 0 1px 0 0; }
.msgs-sb .thumb { width: 54px; border: 1px solid; border-color: #fff #777 #777 #fff; }
.wave-sb { padding-right: 3px; }
.wave-sb .thumb { flex: 1; border: 1px solid; border-color: #fff #888 #888 #fff; border-bottom-width: 2px; padding-left: 644px; }
.wave-sb .thumb i { display: block; width: 1px; height: 13px; background: #ffd200; }

.cur { display: flex; flex-direction: column; }
.cur div { height: 17px; display: flex; align-items: center; padding-left: 11px; }
.cur .now { height: 22px; padding-left: 8px; }
.cur .s { width: 12px; height: 12px; margin-right: 1px; }
.cur .s + .s + .s { margin-right: 0; margin-left: -1px; }
.cur span { flex: 1; text-align: right; padding-right: 8px; line-height: 19px; height: 17px; }
.cur .now span { line-height: 18px; }
.cur .sel { background: #fff; color: #000; }
.cur.vals div, .cur.vals .now { padding: 0; }

.status { height: 24px; border-top: 2px solid #fff; border-bottom: 1px solid #444; display: flex; align-items: center; background: #f0f0f0; box-shadow: inset 0 1px #aaa, inset 0 -2px #fff; }
.s1 { width: 169px; padding-left: 5px; line-height: 18px; border-right: 1px solid #999; letter-spacing: -.1px; }
.s2 { flex: 1; padding-left: 7px; }
.taskbar { height: 44px; display: flex; background: linear-gradient(90deg, #1f2d38 0, #1f2d38 330px, #12264c 400px, #102252 560px, #14284a 760px, #102456 1250px, #152044 1440px, #1f2b36 1480px, #1d2b3a 100%); color: #fff; font: 11.500px/16px "Open Sans", sans-serif; }
.weather { display: flex; padding: 9px 0 0 16px; width: 724px; }
.weather p { margin: -2px 0 0 7px; display: flex; flex-direction: column; }
.dim { color: #c0c6cc; }
.apps { display: flex; width: 480px; }
.apps > svg { margin: 10px 9px 0 9px; }
.apps .start { margin: 12px 13px 0 0; }
.search { width: 218px; height: 30px; margin: 8px 3px 0 0; background: #f1f3f6; border-radius: 15px; display: flex; align-items: center; padding: 0 12px 0 10px; color: #555; font-size: 13px; }
.search span { flex: 1; margin-left: 9px; }
.apps svg.q { margin: 3px 0 0 3px; }
.clock { flex: 1; padding: 7px 22px 0 0; display: flex; flex-direction: column; align-items: flex-end; color: #e0e4e8; }
```
FILE: wave.js
```js
// time (ns) to horizontal position
const T0 = 411, NS = 1.508, END = 890;
const X = t => Math.floor(T0 + t * NS) + 0.5;
const step = (times) => ({ k: 'bit', at: times });
const bus = (...v) => ({ k: 'bus', v });

const clk = []; for (let t = 0; t <= END; t += 10) clk.push([t, t / 10 % 2]);
const seq = (vals, from) => vals.map((v, i) => [from + i * 40, v]);
const digits = ['1', '2', '3', '4', '5', '6', '7', '8', '9'];
const states = from => { const a = [[0, 'SLAVE_IDLE']]; for (let t = from; t <= 870; t += 20) a.push([t, 'S...']); return a; };

// name, value, port direction, expandable, waveform
const M = '/tb_one_slave/dut/m1/', S = '/tb_one_slave/dut/s1/';
const rows = [
  { head: 'APB_Master' },
  [M + 'pclk', "1'h1", 'in', 0, step(clk)],
  [M + 'presetn', "1'h1", 'in', 0, step([[0, 0], [90, 1]])],
  [M + 'slv_addr_in', "2'h1", 'in', 1, bus([0, null], [90, '1'])],
  [M + 'addrin', "4'h1", 'in', 1, bus([0, null], ...seq(digits, 90), ...seq(digits, 450), [810, 'X'], [850, 'a'])],
  [M + 'datain', "8'h00", 'in', 1, bus([0, null], ...seq(['05', '0a', '0f', '14', '19', '1e', '23', '28', '2d', '00'], 90), [810, '09'], [850, '0X'])],
  [M + 'wr', "1'h0", 'in', 0, step([[0, .5], [90, 1], [450, 0], [810, 1]])],
  [M + 'newd', "1'h1", 'in', 0, step([[0, .5], [90, 1]])],
  [M + 'slave_if', "8'h00 1'h0 1'h1", 'in', 1, bus([0, null], [90, '00 0 0'], [130, '00 0 1'])],
  [M + 'master_out', "4'h1 8'h05 1'h1 1'...", 'out', 1, bus([0, '0 00 0 0 0'], [110, '1 ...'], [130, '1 05 1 1 1'])],
  [M + 'dataout', "8'h00", 'out', 1, bus([0, '00'])],
  [M + 'state', 'ENABLE', '', 0, bus([0, 'IDLE'], [110, 'S...'], [130, 'ENABLE'])],
  [M + 'nstate', 'ENABLE', '', 0, bus([0, 'X'], [90, 'S...'], [110, 'ENABLE'])],
  { head: 'APB_Slave 1' },
  [S + 'pclk', "1'h1", 'in', 0, step(clk)],
  [S + 'presetn', "1'h1", 'in', 0, step([[0, 0], [90, 1]])],
  [S + 'paddr', "4'h1", 'in', 1, bus([0, '0'], [110, '1'])],
  [S + 'psel', "1'h1", 'in', 0, step([[0, 0], [110, 1]])],
  [S + 'penable', "1'h1", 'in', 0, step([[0, 0], [130, 1]])],
  [S + 'pwdata', "8'h05", 'in', 1, bus([0, '00'], [110, '05'])],
  [S + 'pwrite', "1'h1", 'in', 0, step([[0, 0], [110, 1]])],
  [S + 'prdata', "8'h00", 'out', 1, bus([0, '00'])],
  [S + 'pready', "1'h0", 'out', 0, step([[0, 0]])],
  [S + 'pslverr', "1'h1", 'out', 0, step([[0, 0], [130, 1]])],
  [S + 'state', 'SLAVE_WRITE', '', 0, bus(...states(130))],
  [S + 'nstate', 'SLAVE_IDLE', '', 0, bus(...states(110))],
  [S + 'addr_err', "1'h1", '', 0, step([[0, 1]])],
  [S + 'addv_err', "1'h0", '', 0, step([[0, 0]])],
  [S + 'data_err', "1'h0", '', 0, step([[0, 1], [110, 0]])]
];

const path = (d, c) => `<path d="${d}" stroke="${c}" fill="none"/>`;
const text = (x, y, s, cls = '', a = 'start') => `<text x="${x}" y="${y}" class="${cls}" text-anchor="${a}">${s}</text>`;
const box = (x, y, sign) => `<rect x="${x - 5}" y="${y - 5}" width="10" height="10" rx="1" fill="#f4f4f4" stroke="#c8ccd8"/><path d="M${x - 2.5} ${y}h5${sign ? `M${x} ${y - 2.5}v5` : ''}" stroke="#000"/>`;
const gem = (x, y, a, b, c, d) => `<path d="M${x} ${y - 7.5}V${y}H${x - 7}z" fill="${a}"/><path d="M${x} ${y - 7.5}l7 7.500H${x}z" fill="${b}"/><path d="M${x - 7} ${y}H${x}v7.500z" fill="${c}"/><path d="M${x} ${y}h7l-7 7.500z" fill="${d}"/><path d="M${x} ${y - 4.5}l4 4.500-4 4.500-4-4.500z" fill="${b}"/>`;

let names = '', values = '', w = '', over = '';
for (let t = 0; t < 981; t += 50) w += path(`M${X(t)} ${t ? 148 : 149}V924`, t ? '#808080' : '#5f8f5f');

rows.forEach((r, i) => {
  const y = 158 + 17 * i;
  const last = i === rows.length - 1 || (rows[i + 1] && rows[i + 1].head);
  if (r.head) {
    names += `<div class="row"><svg width="40" height="17"><path d="M15 9.500h8M28.500 12v5" stroke="#ddd"/>${box(10.5, 9.5, 0)}${gem(27.5, 9, '#ff8080', '#e02828', '#d01818', '#8c0808')}</svg><span>${r.head}</span></div>`;
    values += '<div class="row"></div>';
    w += `<rect x="415" y="${y - 7}" width="72" height="15" fill="#000"/>` + text(415.5, y + 5, `( ${r.head} )`);
    return;
  }
  const [n, v, dir, exp, sig] = r;
  const arrow = dir === 'in' ? '<path d="M38 12h3v-3l5 4-5 4v-2h-3z" fill="#a8f020" stroke="#1c5c10" stroke-width=".7"/>'
    : dir === 'out' ? '<path d="M45 10h3v-3l5 4.500-5 4.500v-2h-3z" fill="#a8f020" stroke="#1c5c10" stroke-width=".7"/>' : '';
  names += `<div class="row"><svg width="58" height="17"><path d="M28.500 0V${last ? 9.5 : 17}M28.500 9.500h9" stroke="#ddd" fill="none"/>${exp ? box(28.5, 9.5, 1) : ''}${gem(45, 9, '#a8e8ff', '#22aee8', '#0c84c8', '#06507c')}${arrow}</svg><span>${n}</span></div>`;
  values += `<div class="row"><span>${v}</span></div>`;

  const hi = y - 5.5, lo = y + 6.5, mid = y + 1.5;
  if (sig.k === 'bit') {
    const lv = l => l === .5 ? mid : l ? hi : lo;
    sig.at.forEach(([t, l], j) => {
      const e = j + 1 < sig.at.length ? sig.at[j + 1][0] : END;
      if (l === .5) w += path(`M${X(t)} ${lv(l)}H${X(e)}`, '#f00');
      else {
        const p = j ? lv(sig.at[j - 1][1]) : lv(l);
        w += path(`M${X(t)} ${p}V${lv(l)}H${X(e) + .5}`, '#32ff14');
      }
      if (t === 450) over += path(`M1089.500 ${hi}V${lo}`, '#d84a10');
      else if (t < 450 && e > 450) over += path(`M1088 ${lv(l)}h3`, '#d84a10');
    });
  } else {
    sig.v.forEach(([t, s], j) => {
      const e = j + 1 < sig.v.length ? sig.v[j + 1][0] : END;
      const a = X(t), b = X(e);
      if (s === null) { w += path(`M${a} ${mid}H${b - 1}`, '#f00'); return; }
      const c = /X/.test(s) && t ? '#f00' : '#b4ffb4';
      let d = `M${b - (e < END ? 1 : 0)} ${hi}H${a + 1}v4M${a} ${hi + 4}v5M${a + 1} ${hi + 8}V${lo}H${b - (e < END ? 1 : 0)}`;
      if (e < END) d += `v-4M${b - 1} ${hi}v4`;
      w += text(a + (s[0] === '1' ? 4 : 3), y + 5, s, /\.\.\./.test(s) ? 'dots' : '') + path(d, c);
      over += t === 450 ? path(`M1089.500 ${hi}V${lo}`, '#5040c8') : (t < 450 && e > 450) ? path(`M1088 ${hi}h3M1088 ${lo}h3`, '#5048c0') : '';
    });
  }
});
w += '<path d="M1088 149h1v775h-1zM1090 149h1v775h-1z" fill="#ffd200"/><path d="M1089 149h1v775h-1z" fill="#c8b050"/>' + over;
names += '<div class="mark"><svg width="5" height="7"><path d="M.5 .5L3.500 3.500L.5 6.500z" stroke="#000" fill="#808080"/></svg></div>';
values += '<div class="mark"></div>';
document.getElementById('names').innerHTML = names;
document.getElementById('values').innerHTML = values;
document.getElementById('wave').innerHTML = w;

let s = '';
for (let t = 5; t <= 980; t += 5) s += path(`M${X(t)} ${t % 25 ? 930 : 927}V${t % 25 ? 934 : 934.5}`, '#32ff1e');
s += text(411, 947, 'ns', 't');
for (let t = 50; t <= 950; t += 50) s += text(X(t) - .5, 947, `${t} ns`, 't', 'middle');
s += path('M411 949.500H1890M411 966.500H1890', '#808080') + path('M411.500 927V950', '#ffd200');
s += path('M437 958.500H745M779 958.500H1088', '#fff') + text(762, 964, '450 ns', '', 'middle');
s += '<path d="M1088 927h3v40h-3z" fill="#ffd200"/>';
s += '<rect x="411.500" y="950.500" width="25" height="15" fill="#000" stroke="#ffd200"/>' + text(424, 963, '0 ns', 'y', 'middle');
s += '<rect x="1071.500" y="967.500" width="36" height="15" fill="#000" stroke="#ffd200"/>' + text(1089.5, 980, '450 ns', 'y', 'middle');
document.getElementById('scalebar').innerHTML = s;
```
